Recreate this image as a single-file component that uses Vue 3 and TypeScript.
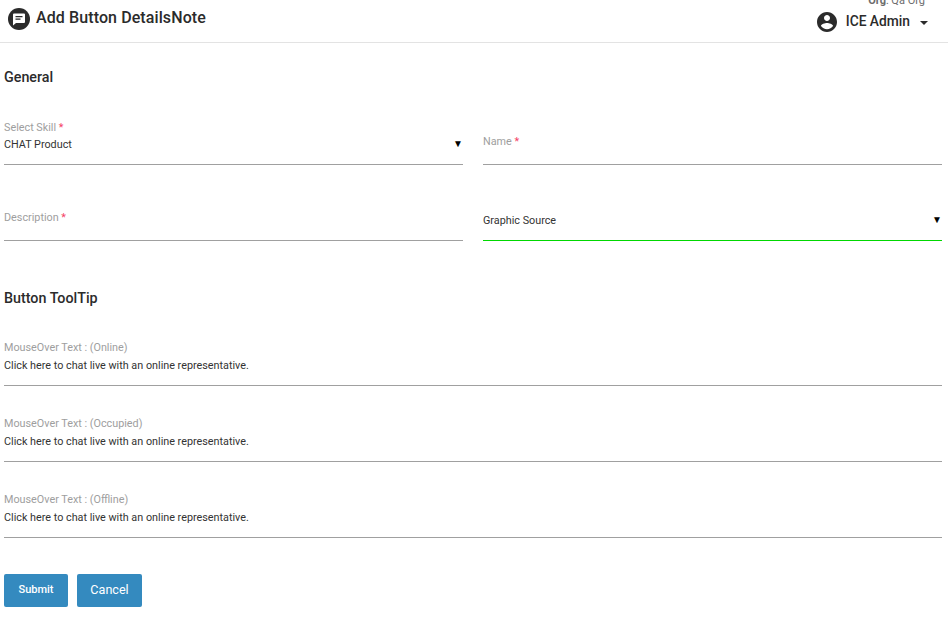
<script setup lang="ts">
const tips: string[] = ['Online', 'Occupied', 'Offline']
const tipText = 'Click here to chat live with an online representative.'
</script>

<template>
  <div class="page">
    <header class="bar">
      <div class="title-wrap">
        <svg class="logo" width="22" height="22" viewBox="0 0 22 22">
          <circle cx="11" cy="11" r="11" fill="#2b2b2b" />
          <path d="M6 5.5h10a1 1 0 0 1 1 1v7.5a1 1 0 0 1-1 1H8l-3 2.6V6.5a1 1 0 0 1 1-1z" fill="#fff" />
          <path d="M7.5 8h7v1.2h-7zM7.5 10.6h5v1.2h-5z" fill="#2b2b2b" />
        </svg>
        <h1 class="title">Add Button DetailsNote</h1>
      </div>
      <div class="user">
        <div class="org"><b>Org</b>: Qa Org</div>
        <div class="user-row">
          <svg width="24" height="24" viewBox="0 0 24 24" fill="#2b2b2b">
            <path d="M12 2C6.48 2 2 6.48 2 12s4.48 10 10 10 10-4.48 10-10S17.52 2 12 2zm0 3c1.66 0 3 1.34 3 3s-1.34 3-3 3-3-1.34-3-3 1.34-3 3-3zm0 14.2c-2.5 0-4.71-1.28-6-3.22.03-1.99 4-3.08 6-3.08 1.99 0 5.97 1.09 6 3.08-1.29 1.94-3.5 3.22-6 3.22z" />
          </svg>
          <span class="user-name">ICE Admin</span>
          <span class="caret"></span>
        </div>
      </div>
    </header>

    <main class="form">
      <h2 class="section first">General</h2>
      <div class="grid">
        <div class="field tight">
          <span class="label">Select Skill <i>*</i></span>
          <div class="value">CHAT Product</div>
          <span class="arrow">▼</span>
        </div>
        <div class="field hint">
          <span class="label">Name <i>*</i></span>
        </div>
        <div class="field hint">
          <span class="label">Description <i>*</i></span>
        </div>
        <div class="field active">
          <div class="value">Graphic Source</div>
          <span class="arrow">▼</span>
        </div>
      </div>

      <h2 class="section second">Button ToolTip</h2>
      <div class="tips">
        <div v-for="t in tips" :key="t" class="field">
          <span class="label">MouseOver Text : ({{ t }})</span>
          <div class="value">{{ tipText }}</div>
        </div>
      </div>

      <div class="actions">
        <button class="btn submit" type="button">Submit</button>
        <button class="btn cancel" type="button">Cancel</button>
      </div>
    </main>
  </div>
</template>

<style>
html, body { margin: 0; background: #fff; }
</style>

<style scoped>
.page {
  font-family: Roboto, "Liberation Sans", sans-serif;
  color: #2b2b2b;
  width: 948px;
  height: 631px;
  overflow: hidden;
}
.bar {
  height: 42px;
  border-bottom: 1px solid #e3e3e3;
  display: flex;
  justify-content: space-between;
  overflow: hidden;
  padding: 0 23px 0 8px;
}
.title-wrap {
  display: flex;
  align-items: center;
  gap: 6px;
  height: 38px;
}
.title {
  margin: 0 0 3px;
  font-size: 16px;
  font-weight: 500;
  letter-spacing: 0.1px;
}
.user {
  display: flex;
  flex-direction: column;
  align-items: flex-end;
  margin-top: -6px;
}
.org {
  font-size: 11px;
  line-height: 14px;
  color: #6d6d6d;
}
.org b { font-weight: 700; }
.user-row {
  display: flex;
  align-items: center;
  height: 24px;
  margin-top: 2px;
  margin-right: -3px;
}
.user-name {
  font-size: 13.8px;
  font-weight: 500;
  margin-left: 7px;
  margin-bottom: 2px;
}
.caret {
  width: 0;
  height: 0;
  border-left: 4.5px solid transparent;
  border-right: 4.5px solid transparent;
  border-top: 4.5px solid #2b2b2b;
  margin-left: 10px;
  margin-top: 2px;
}
.form { padding: 0 6px 0 4px; }
.section {
  margin: 0;
  font-size: 14.3px;
  line-height: 18px;
  font-weight: 500;
}
.first { padding-top: 25px; }
.second { padding-top: 48px; }
.grid {
  display: grid;
  grid-template-columns: 1fr 1fr;
  column-gap: 20px;
  margin-top: 3px;
}
.tips { margin-top: 3px; }
.field {
  position: relative;
  box-sizing: border-box;
  height: 76px;
  display: flex;
  flex-direction: column;
  justify-content: flex-end;
  padding-bottom: 12px;
  border-bottom: 1px solid #a0a0a0;
}
.hint { padding-bottom: 15px; }
.active { border-bottom-color: #00d800; }
.label {
  display: block;
  font-size: 10.8px;
  line-height: 14px;
  color: #9e9e9e;
}
.label i { color: #f44366; font-style: normal; }
.value {
  font-size: 10.8px;
  line-height: 14px;
  color: #333;
  margin-top: 4px;
}
.tight .value { margin-top: 3px; }
.arrow {
  position: absolute;
  right: 0;
  bottom: 15px;
  font-size: 10px;
  line-height: 10px;
  color: #000;
}
.actions {
  display: flex;
  gap: 9px;
  margin-top: 36px;
}
.btn {
  height: 33px;
  border: none;
  border-radius: 2px;
  background: #348abf;
  color: #fff;
  font-family: inherit;
  font-weight: 500;
  padding: 0 0 2px;
}
.submit { width: 64px; font-size: 11px; }
.cancel { width: 65px; font-size: 12.6px; font-weight: 400; }
</style>
